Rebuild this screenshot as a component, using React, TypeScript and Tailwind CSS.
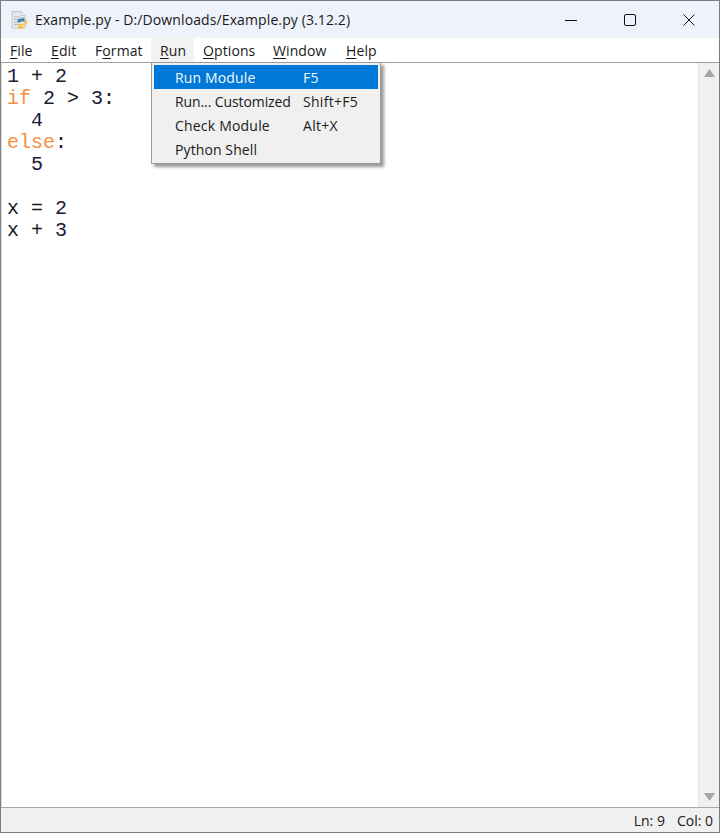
import { ReactNode } from 'react';

const uiFont = "font-['Open_Sans','Noto_Sans',sans-serif]";

function PythonIcon() {
    return (
        <svg width="20" height="20" viewBox="0 0 20 20" className="shrink-0">
            <path d="M2 1.500h9l4 4v12.500H2z" fill="#e8e8ea" stroke="#c4c6cc" strokeWidth="1" />
            <path d="M11 1.500v4h4" fill="#f8f8fa" stroke="#c4c6cc" strokeWidth="1" />
            <path d="M4 7h6M4 9.500h4M4 12h4M4 14.500h4" stroke="#b4b8c0" strokeWidth="1" />
            <path d="M10 8c2-.6 4.500-.5 4.500 1v2.500h-4v1H7.800V10c0-1 1-1.300 2-1.300h3V8.200z" fill="#3f7cb0" />
            <path d="M8.800 18.600c2 .5 4.600.4 4.600-1.100V16h-3v-1H15c1.200 0 2-.8 2-2.500v-1.400c0-1-1-1.300-2-1.300v2.400c0 1.200-.8 1.700-1.800 1.700H9.500c-.9 0-1.400.5-1.400 1.400v2.500c0 .7.200 1 .7 1.200z" fill="#f3c53a" />
        </svg>
    );
}

function MenuLabel({ u, pre = '', post = '', width, active = false }: { u: string; pre?: string; post?: string; width: string; active?: boolean }) {
    return (
        <div className={`h-[24px] flex items-center pl-[9px] ${width} ${active ? 'bg-[#f2f2f2]' : ''}`}>
            <span className="text-[14px] text-[#1a1a1a] whitespace-nowrap tracking-[0.1px]">
                {pre}
                <span className="underline underline-offset-2 decoration-1">{u}</span>
                {post}
            </span>
        </div>
    );
}

function DropdownRow({ label, shortcut, spacing = '', active = false }: { label: string; shortcut?: string; spacing?: string; active?: boolean }) {
    return (
        <div className={`h-[24px] flex items-center text-[14px] whitespace-nowrap ${active ? 'bg-[#0078d7] text-[#f4f8fc]' : 'text-[#1a1a1a]'}`}>
            <span className={`w-[149px] pl-[21px] ${spacing}`}>{label}</span>
            <span className="tracking-[0.3px]">{shortcut}</span>
        </div>
    );
}

function CodeLine({ children }: { children?: ReactNode }) {
    return <div className="h-[22px] leading-[22px] whitespace-pre">{children}</div>;
}

function Num({ children }: { children: ReactNode }) {
    return <span className="text-[#1a1a3a]">{children}</span>;
}

export default function App() {
    return (
        <div className={`relative w-[720px] h-[833px] flex flex-col overflow-hidden bg-white border border-[#7d7d7d] ${uiFont}`}>
            {/* Title bar */}
            <div className="h-[37px] flex items-center bg-[#eef2fa] pl-[9px] shrink-0">
                <PythonIcon />
                <span className="ml-[5px] text-[14px] text-[#1a1a1a] tracking-[0.11px] whitespace-nowrap">Example.py - D:/Downloads/Example.py (3.12.2)</span>
                <div className="ml-auto flex items-center h-full">
                    <div className="w-[58px] flex justify-center">
                        <svg width="12" height="12" viewBox="0 0 12 12"><path d="M0 6.500h12" stroke="#111" strokeWidth="1" /></svg>
                    </div>
                    <div className="w-[59px] flex justify-center">
                        <svg width="12" height="12" viewBox="0 0 12 12"><rect x="0.500" y="0.500" width="11" height="11" rx="1.500" fill="none" stroke="#111" strokeWidth="1" /></svg>
                    </div>
                    <div className="w-[59px] flex justify-center mr-[1px]">
                        <svg width="12" height="12" viewBox="0 0 12 12"><path d="M.5.500l11 11M11.500.500l-11 11" stroke="#111" strokeWidth="1" /></svg>
                    </div>
                </div>
            </div>

            {/* Menu bar */}
            <div className="h-[24px] flex items-center bg-white shrink-0">
                <MenuLabel u="F" post="ile" width="w-[41px]" />
                <MenuLabel u="E" post="dit" width="w-[44px]" />
                <MenuLabel pre="F" u="o" post="rmat" width="w-[65px]" />
                <MenuLabel u="R" post="un" width="w-[43px]" active />
                <MenuLabel u="O" post="ptions" width="w-[70px]" />
                <MenuLabel u="W" post="indow" width="w-[73px]" />
                <MenuLabel u="H" post="elp" width="w-[50px]" />
            </div>
            <div className="h-[1px] bg-[#a0a0a0] shrink-0" />

            {/* Editor + scrollbar */}
            <div className="flex-1 flex min-h-0">
                <div className="flex-1 bg-white pl-[5px] pt-[3px] border-l border-[#e0e0e0] font-['Liberation_Mono',monospace] text-[20px] text-[#1a1a1a]">
                    <CodeLine><Num>1</Num> + <Num>2</Num></CodeLine>
                    <CodeLine><span className="text-[#f58f42]">if</span> <Num>2</Num> &gt; <Num>3</Num>:</CodeLine>
                    <CodeLine>  <Num>4</Num></CodeLine>
                    <CodeLine><span className="text-[#f58f42]">else</span>:</CodeLine>
                    <CodeLine>  <Num>5</Num></CodeLine>
                    <CodeLine />
                    <CodeLine>x = <Num>2</Num></CodeLine>
                    <CodeLine>x + <Num>3</Num></CodeLine>
                </div>
                <div className="w-[21px] bg-[#f0f0f0] border-l border-[#e4e4e4] flex flex-col items-center justify-between py-[6px] shrink-0">
                    <svg width="11" height="8" viewBox="0 0 11 8"><path d="M5.500 0L11 8H0z" fill="#a6a6a6" /></svg>
                    <svg width="11" height="8" viewBox="0 0 11 8"><path d="M5.500 8L11 0H0z" fill="#a6a6a6" /></svg>
                </div>
            </div>

            {/* Status bar */}
            <div className="h-[25px] bg-[#f0f0f0] border-t border-[#a8a8a8] flex items-center justify-end pr-[6px] gap-[12px] text-[14px] text-[#1a1a1a] shrink-0">
                <span>Ln: 9</span>
                <span>Col: 0</span>
            </div>

            {/* Run dropdown */}
            <div className="absolute left-[150px] top-[61px] w-[230px] h-[102px] bg-[#f0f0f0] border border-[#9a9a9a] p-[2px] shadow-[3px_3px_3px_rgba(0,0,0,0.4)]">
                <DropdownRow label="Run Module" shortcut="F5" spacing="tracking-[0.15px]" active />
                <DropdownRow label="Run... Customized" shortcut="Shift+F5" spacing="tracking-[-0.1px]" />
                <DropdownRow label="Check Module" shortcut="Alt+X" spacing="tracking-[0.2px]" />
                <DropdownRow label="Python Shell" spacing="tracking-[0.1px]" />
            </div>
        </div>
    );
}
